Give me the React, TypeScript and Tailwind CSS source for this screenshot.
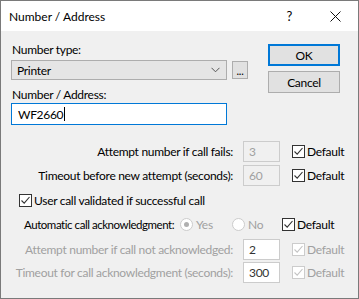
import React from "react";

const font = { fontFamily: 'Lato, "Liberation Sans", sans-serif' };

const Check = ({ disabled = false }: { disabled?: boolean }) => (
  <span
    className={`flex h-[13px] w-[13px] shrink-0 items-center justify-center border bg-white ${
      disabled ? "border-[#cccccc]" : "border-[#333333]"
    }`}
  >
    <svg width="11" height="11" viewBox="0 0 11 11">
      <path
        d="M1.5 5.5 L4.2 8.2 L9.5 2"
        fill="none"
        stroke={disabled ? "#c4c4c4" : "#333333"}
        strokeWidth="1.1"
      />
    </svg>
  </span>
);

const DefaultBox = ({ disabled = false }: { disabled?: boolean }) => (
  <label className="flex items-center gap-[2px] whitespace-nowrap">
    <Check disabled={disabled} />
    <span className={disabled ? "text-[#a0a0a0]" : "text-black"}>Default</span>
  </label>
);

const Radio = ({ on, label, w }: { on: boolean; label: string; w: string }) => (
  <span className={`flex shrink-0 items-center gap-[3px] text-[#a0a0a0] ${w}`}>
    <span className="flex h-[13px] w-[13px] items-center justify-center rounded-full border border-[#cccccc] bg-white">
      {on && <span className="h-[5px] w-[5px] rounded-full bg-[#b0b0b0]" />}
    </span>
    {label}
  </span>
);

const Row = ({
  label,
  value,
  labelDim = false,
  boxWhite = false,
  valueDim = true,
  defDim = false,
  mt,
}: {
  label: string;
  value: string;
  labelDim?: boolean;
  boxWhite?: boolean;
  valueDim?: boolean;
  defDim?: boolean;
  mt: string;
}) => (
  <div className={`flex h-[21px] items-center ${mt}`}>
    <span className={`w-[222px] whitespace-nowrap text-right ${labelDim ? "text-[#a0a0a0]" : "text-black"}`}>
      {label}
    </span>
    <span
      className={`ml-[10px] flex h-[21px] w-[37px] items-center border border-[#cccccc] pl-[5px] ${
        boxWhite ? "bg-white" : "bg-[#f0f0f0]"
      } ${valueDim ? "text-[#a0a0a0]" : "text-[#333333]"}`}
    >
      {value}
    </span>
    <span className="ml-[12px]">
      <DefaultBox disabled={defDim} />
    </span>
  </div>
);

export default function App() {
  return (
    <div
      className="flex h-[299px] w-[359px] flex-col border border-[#7a7a7a] bg-[#f0f0f0] text-[12px] leading-[15px] tracking-[-0.3px] text-black"
      style={font}
    >
      <div className="flex h-[30px] shrink-0 items-center bg-white pl-[8px]">
        <span className="flex-1 text-[12px] tracking-normal">Number / Address</span>
        <span className="mr-[38px] text-[13px]">?</span>
        <svg className="mr-[17px]" width="11" height="11" viewBox="0 0 11 11">
          <path d="M0.5 0.5 L10.5 10.5 M10.5 0.5 L0.5 10.5" stroke="#111" strokeWidth="1" />
        </svg>
      </div>

      <div className="flex flex-col pl-[10px]">
        <div className="flex">
          <div className="flex w-[238px] flex-col">
            <span className="mt-[11px] pl-[1px]">Number type:</span>
            <div className="mt-[3px] flex items-center">
              <div className="flex h-[20px] w-[216px] items-center border border-[#adadad] bg-[#e5e5e5] pl-[5px]">
                <span className="flex-1">Printer</span>
                <svg className="mr-[6px]" width="9" height="6" viewBox="0 0 9 6">
                  <path d="M0.5 0.8 L4.5 4.8 L8.5 0.8" fill="none" stroke="#555" strokeWidth="1" />
                </svg>
              </div>
              <div className="ml-[5px] flex h-[18px] w-[16px] items-end justify-center border border-[#adadad] bg-[#e1e1e1] pb-[2px] text-[11px] leading-[11px]">
                ...
              </div>
            </div>
            <span className="mt-[7px] pl-[1px]">Number / Address:</span>
            <div className="mt-[1px] flex h-[22px] w-[216px] items-center border border-[#0078d7] bg-white pl-[6px]">
              WF2660
              <span className="ml-[1px] h-[14px] w-px bg-black" />
            </div>
          </div>
          <div className="ml-[19px] mt-[13px] flex flex-col gap-[5px]">
            <div className="flex h-[22px] w-[72px] items-center justify-center border-2 border-[#0078d7] bg-[#e1e1e1]">
              OK
            </div>
            <div className="flex h-[22px] w-[72px] items-center justify-center border border-[#adadad] bg-[#e1e1e1]">
              Cancel
            </div>
          </div>
        </div>

        <Row label="Attempt number if call fails:" value="3" mt="mt-[16px]" />
        <Row label="Timeout before new attempt (seconds):" value="60" mt="mt-[3px]" />

        <label className="ml-[8px] mt-[7px] flex items-center gap-[2px]">
          <Check />
          <span>User call validated if successful call</span>
        </label>

        <div className="mt-[7px] flex h-[18px] items-center">
          <span className="ml-[13px] w-[156px] shrink-0 whitespace-nowrap text-[11.5px] tracking-[-0.45px]">
            Automatic call acknowledgment:
          </span>
          <Radio on label="Yes" w="w-[52px]" />
          <Radio on={false} label="No" w="w-[50px]" />
          <DefaultBox />
        </div>

        <Row
          label="Attempt number if call not acknowledged:"
          value="2"
          labelDim
          boxWhite
          valueDim={false}
          defDim
          mt="mt-[6px]"
        />
        <Row
          label="Timeout for call acknowledgment (seconds):"
          value="300"
          labelDim
          boxWhite
          valueDim={false}
          defDim
          mt="mt-[2px]"
        />
      </div>
    </div>
  );
}
